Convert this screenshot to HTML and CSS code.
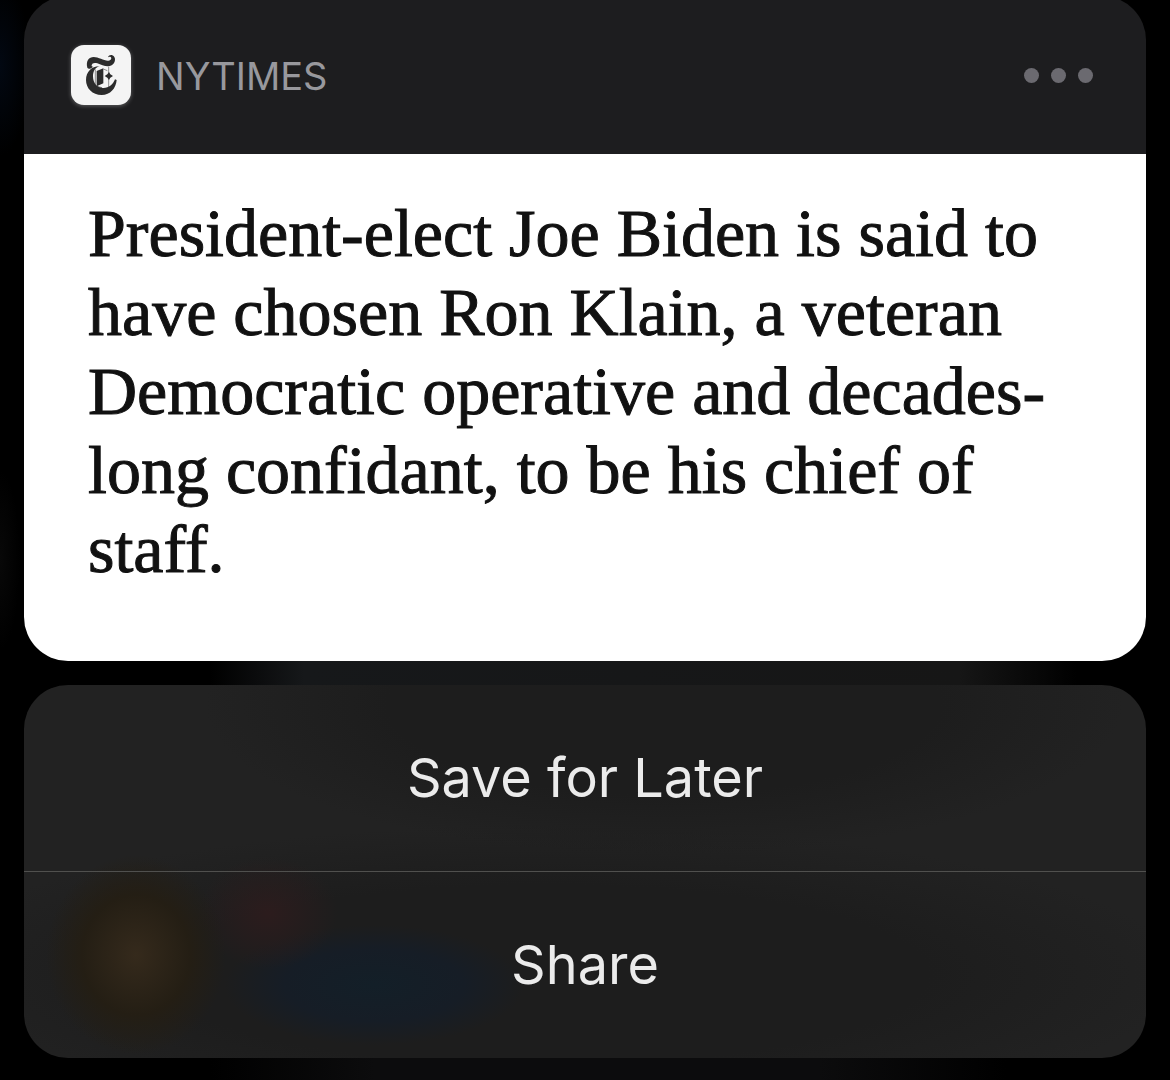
FILE: index.html
```html
<!DOCTYPE html>
<html lang="en">
<head>
<meta charset="utf-8">
<meta name="viewport" content="width=device-width, initial-scale=1">
<title>NYTimes notification</title>
<link rel="stylesheet" href="styles.css">
</head>
<body>
<main class="screen">
  <article class="card">
    <header class="card-header">
      <svg class="app-icon" viewBox="33 30 180 180" aria-hidden="true">
        <path fill="#2b2b2b" d="M82 98C77 78 87 66 101 66C116 66 132 78 145 77C153 76 156 70 152 66C149 64 147 65 144 67C146 61 152 59 157 61C169 66 167 84 155 91C142 98 126 90 112 85C103 82 96 84 95 91C94 94 97 96 100 95C93 101 85 104 82 98Z"/>
        <path fill="#2b2b2b" d="M119 94C104 97 99 111 99 124C99 146 112 158 128 159C146 160 159 149 165 133L170 135C168 160 151 180 125 180C97 180 78 160 78 135C78 109 97 93 119 94Z"/>
        <path fill="#2b2b2b" d="M110 108L130 100V145L110 154Z"/>
        <path fill="none" stroke="#2b2b2b" stroke-width="1.5" d="M106 103V154M146 95V160M130 102L142 107M111 154L126 158"/>
        <path fill="#2b2b2b" d="M147 111L151 118L159 123L151 128L147 135L142 128L134 123L142 118Z"/>
      </svg>
      <span class="app-name">NYTIMES</span>
      <button class="more" type="button" aria-label="More options">
        <span class="dot"></span><span class="dot"></span><span class="dot"></span>
      </button>
    </header>
    <p class="headline">President-elect Joe Biden is said to have chosen Ron Klain, a veteran Democratic operative and decades-long confidant, to be his chief of staff.</p>
  </article>
  <div class="actions">
    <button class="action" type="button">Save for Later</button>
    <button class="action" type="button">Share</button>
  </div>
</main>
</body>
</html>
```

FILE: styles.css
```css
* {
  box-sizing: border-box;
}

body {
  margin: 0;
  min-height: 100vh;
  background:
    radial-gradient(30px 90px at 0 66px, #020812, transparent),
    radial-gradient(20px 90px at 0 560px, #080808, transparent),
    linear-gradient(90deg, transparent 18%, #16181a 26%, #161616 82%, transparent 92%) 0 661px / 100% 24px no-repeat,
    linear-gradient(90deg, transparent 18%, #0c0c0d 32%, #0c0c0d 70%, transparent 86%) 0 1058px / 100% 22px no-repeat,
    #000;
  font-family: Inter, "Liberation Sans", sans-serif;
}

.screen {
  display: flex;
  flex-direction: column;
  gap: 24px;
  padding: 0 24px 22px;
}

.card {
  margin-top: -4px;
  border-radius: 44px;
  overflow: hidden;
}

.card-header {
  display: flex;
  align-items: center;
  height: 158px;
  padding: 0 53px 0 47px;
  background: #1d1d1f;
}

.app-icon {
  width: 60px;
  height: 60px;
  border-radius: 13px;
  background: #f4f4f4;
  box-shadow: 0 1px 4px rgba(255, 255, 255, 0.3);
}

.app-name {
  margin-left: 25px;
  padding-top: 2px;
  color: #98989d;
  font-size: 38px;
  line-height: 48px;
}

.more {
  display: flex;
  gap: 12px;
  margin-left: auto;
  padding: 0;
  border: 0;
  background: none;
}

.dot {
  width: 15px;
  height: 15px;
  border-radius: 50%;
  background: #6b6a70;
}

.headline {
  margin: 0;
  padding: 40px 64px 72px;
  background: #fff;
  color: #111;
  font-family: "Liberation Serif", serif;
  font-size: 68px;
  line-height: 79px;
  -webkit-text-stroke: 1px #111;
}

.actions {
  display: flex;
  flex-direction: column;
  border-radius: 44px;
  overflow: hidden;
  background:
    radial-gradient(90px 100px at 112px 270px, #352a1c, #241e14 60%, transparent),
    radial-gradient(70px 56px at 244px 228px, #2c1c1d, transparent),
    radial-gradient(150px 60px at 350px 300px, #131f28, #161d26 60%, transparent),
    radial-gradient(460px 150px at 640px 20px, #1d1d1d 60%, transparent),
    radial-gradient(640px 150px at 520px 290px, #1d1d1d 60%, transparent),
    #222;
}

.action {
  height: 186px;
  padding: 0;
  border: 0;
  background: none;
  color: #ebebeb;
  font-family: inherit;
  font-size: 54px;
  line-height: 68px;
}

.action + .action {
  height: 187px;
  border-top: 1px solid #50504e;
}
```
